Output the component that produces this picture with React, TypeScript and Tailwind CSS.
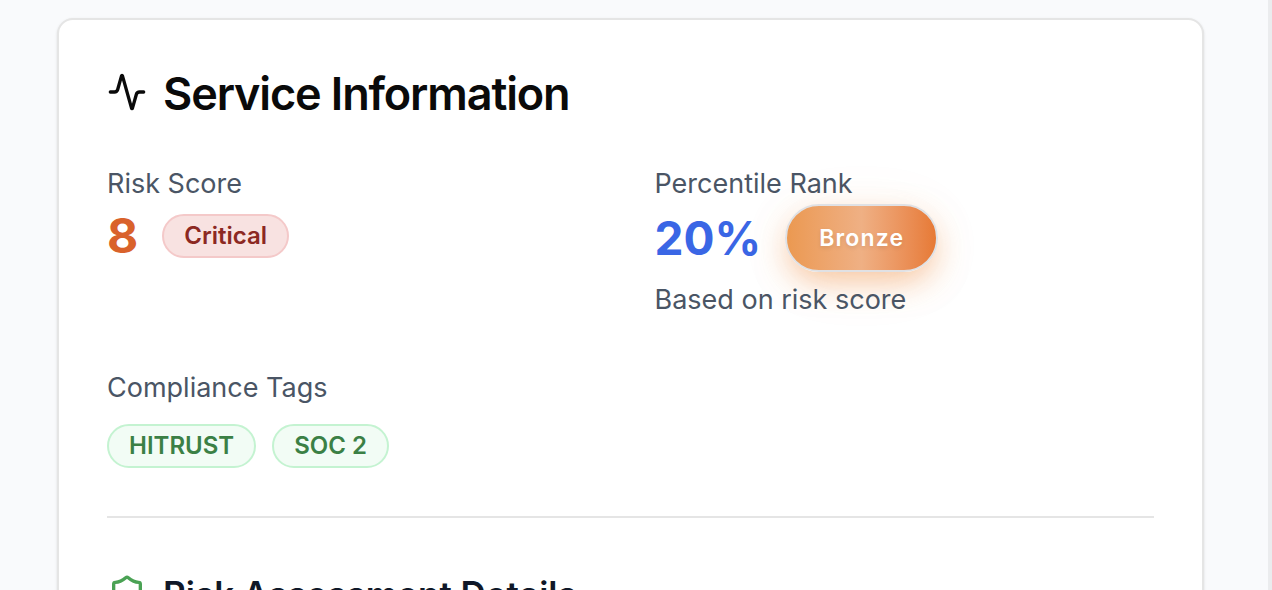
import type { ReactNode } from "react";
import { Activity, Shield } from "lucide-react";

function Label({ children }: { children: ReactNode }) {
  return <p className="text-[27px] leading-10 text-gray-600">{children}</p>;
}

function Tag({ children }: { children: ReactNode }) {
  return (
    <span className="inline-flex items-center rounded-full border-2 border-[#c4f3d1] bg-[#f2fcf5] px-5 py-1 text-2xl font-semibold text-[#3b8045]">
      {children}
    </span>
  );
}

export default function App() {
  return (
    <main className="h-screen overflow-hidden border-r-4 border-[#ebecee] bg-[#f9fafc] pt-[18px] pr-16 pl-[57px] font-[Inter,sans-serif]">
      <section className="rounded-2xl border-2 border-[#e5e5e5] bg-white px-12 pt-12 pb-12 shadow-sm">
        <h1 className="flex items-start gap-4 text-[45px] leading-[52px] font-semibold tracking-tight text-[#0a0a0a]">
          <Activity className="mt-1 size-10" strokeWidth={2} aria-hidden="true" />
          Service Information
        </h1>
        <div className="mt-11 grid grid-cols-2 gap-12">
          <div>
            <Label>Risk Score</Label>
            <div className="mt-2 flex items-center gap-6">
              <span className="text-5xl leading-[48px] font-bold text-[#d9622b]">8</span>
              <span className="inline-flex items-center rounded-full border-2 border-[#f4c9c9] bg-[#f8e2e1] px-5 py-1 text-2xl font-semibold text-[#8c2822]">
                Critical
              </span>
            </div>
          </div>
          <div>
            <Label>Percentile Rank</Label>
            <div className="flex items-center gap-6">
              <span className="text-[46px] leading-[66px] font-bold text-[#3a66e5]">20%</span>
              <span className="inline-flex items-center rounded-full border-2 border-[#e0e1e4] bg-linear-to-r from-[#eb984f] via-[#efb084] to-[#e67832] bg-origin-border px-8 py-4 text-[23px] leading-8 font-semibold tracking-wider text-white shadow-[0_12px_32px_-4px_rgba(240,140,60,0.5),0_8px_64px_rgba(240,140,60,0.06)] [text-shadow:0_2px_4px_rgba(0,0,0,0.1)]">
                Bronze
              </span>
            </div>
            <p className="mt-2 text-[27px] leading-10 text-gray-600">Based on risk score</p>
          </div>
        </div>
        <div className="mt-12">
          <Label>Compliance Tags</Label>
          <div className="mt-4 flex gap-4">
            <Tag>HITRUST</Tag>
            <Tag>SOC 2</Tag>
          </div>
        </div>
        <hr className="mt-12 border-t-2 border-[#e5e5e5]" />
        <h2 className="mt-12 flex items-center gap-4 text-[35px] leading-[56px] font-semibold text-gray-900">
          <Shield className="size-10 text-[#4aa254]" strokeWidth={2} aria-hidden="true" />
          Risk Assessment Details
        </h2>
      </section>
    </main>
  );
}
